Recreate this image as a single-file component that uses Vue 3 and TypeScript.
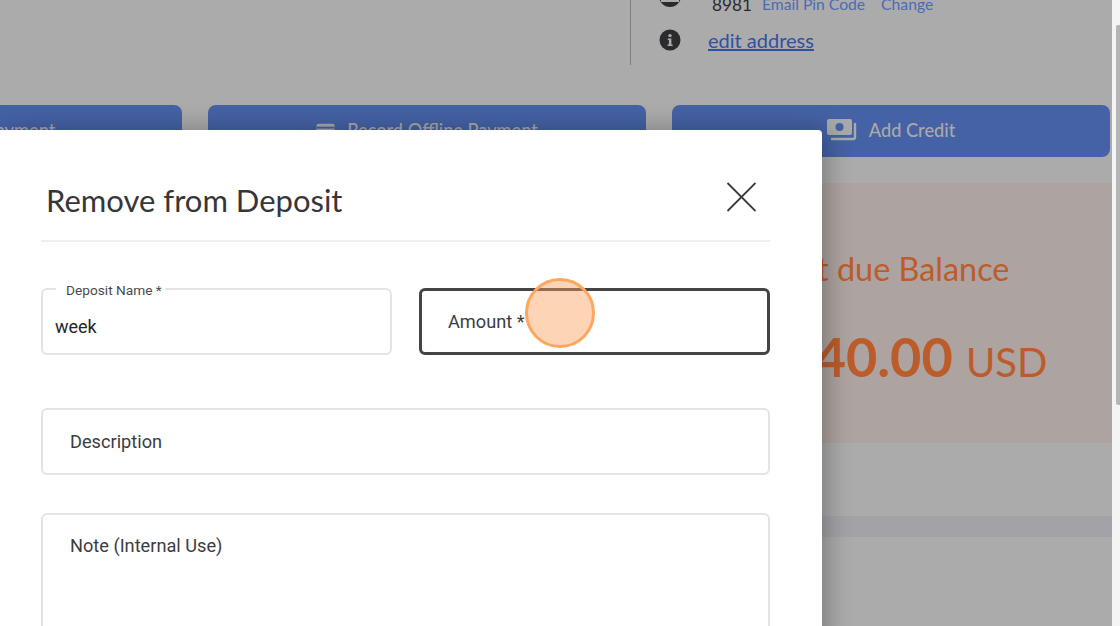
<template>
  <div class="page">
    <div class="content">
      <div class="top">
        <div class="info">
          <div class="infoRow cutRow">
            <span class="dot minus"><i></i></span>
            <span class="pin">8981</span>
            <a class="small">Email Pin Code</a>
            <a class="small">Change</a>
          </div>
          <div class="infoRow">
            <span class="dot">
              <svg width="22" height="22" viewBox="0 0 22 22">
                <circle cx="11" cy="11" r="10.5" fill="#2a2b2d" />
                <circle cx="11" cy="6.6" r="1.7" fill="#ababab" />
                <path d="M8.8 9.4h3.6v6h1.2v1.6H8.6v-1.6h1.3v-4.4H8.8z" fill="#ababab" />
              </svg>
            </span>
            <a class="edit">edit address</a>
          </div>
        </div>
      </div>

      <div class="actions">
        <div class="action">
          <svg width="19" height="14" viewBox="0 0 20 14">
            <rect x="0.5" y="0.5" width="19" height="13" rx="2" fill="#a9a9a9" />
            <rect x="0.5" y="3.5" width="19" height="2" fill="#4462a5" />
          </svg>
          <span>Take Card Payment</span>
        </div>
        <div class="action">
          <svg width="19" height="14" viewBox="0 0 20 14">
            <rect x="0.5" y="0.5" width="19" height="13" rx="2" fill="#a9a9a9" />
            <rect x="0.5" y="3.5" width="19" height="2" fill="#4462a5" />
          </svg>
          <span>Record Offline Payment</span>
        </div>
        <div class="action">
          <svg width="30" height="22" viewBox="0 0 30 22">
            <rect x="0" y="0" width="25" height="16" rx="2" fill="#a9a9a9" />
            <circle cx="12.5" cy="8" r="4" fill="#4462a5" />
            <path d="M28 4v14.5a1.5 1.5 0 0 1-1.5 1.5H4" fill="none" stroke="#a9a9a9" stroke-width="2.4" />
          </svg>
          <span>Add Credit</span>
        </div>
      </div>

      <div class="balance">
        <div class="balanceInner">
          <div class="balanceLabel">Past due Balance</div>
          <div class="balanceAmount">$240.00 <small>USD</small></div>
        </div>
      </div>
      <div class="stripe"></div>
    </div>

    <div class="scrollbar"><div class="thumb"></div></div>

    <div class="modal">
      <div class="head">
        <h2>Remove from Deposit</h2>
        <svg class="close" width="30" height="30" viewBox="0 0 30 30">
          <path d="M1.5 1l28 28M29.5 1L1.5 29" stroke="#3a3a3d" stroke-width="1.8" fill="none" />
        </svg>
      </div>
      <div class="form">
        <div class="pair">
          <div class="field filled">
            <label>Deposit Name *</label>
            <span class="value">week</span>
          </div>
          <div class="field focused">
            <span class="placeholder">Amount *</span>
          </div>
        </div>
        <div class="field">
          <span class="placeholder">Description</span>
        </div>
        <div class="field note">
          <span class="placeholder">Note (Internal Use)</span>
        </div>
      </div>
    </div>

    <div class="clickMark"></div>
  </div>
</template>

<script setup lang="ts">
</script>

<style>
html,
body {
  margin: 0;
  overflow: hidden;
}
</style>

<style scoped>
.page {
  position: relative;
  width: 1120px;
  height: 626px;
  overflow: hidden;
  display: flex;
  background: #ababab;
  font-family: Lato, "Liberation Sans", sans-serif;
}
.content {
  width: 1112px;
  flex-shrink: 0;
}
.top {
  height: 65px;
  margin-bottom: 40px;
  display: flex;
}
.info {
  margin-left: 630px;
  padding-left: 28px;
  border-left: 1px solid #7f7f7f;
  height: 65px;
  box-sizing: border-box;
  flex: 1;
}
.infoRow {
  display: flex;
  align-items: center;
  height: 40px;
}
.cutRow {
  height: 24px;
  margin-top: -8px;
  margin-bottom: 4px;
}
.dot {
  width: 22px;
  height: 22px;
  flex-shrink: 0;
  margin-right: 27px;
  display: block;
}
.minus {
  background: #2a2b2d;
  border-radius: 50%;
  position: relative;
  margin-top: -16px;
  margin-right: 28px;
}
.minus i {
  position: absolute;
  left: 2px;
  right: 2px;
  top: 12px;
  height: 5px;
  background: #ababab;
}
.pin {
  font-size: 17.2px;
  color: #2a2a2a;
  margin-left: 3px;
  margin-right: 10px;
}
.small {
  font-size: 15.7px;
  color: #4a6cb5;
  margin-right: 16px;
}
.edit {
  font-size: 20px;
  color: #2f50a5;
  text-decoration: underline;
}
.actions {
  display: flex;
  gap: 26px;
  margin-left: -256px;
  width: 1366px;
}
.action {
  flex: 1;
  height: 52px;
  background: #4462a5;
  border-radius: 8px;
  display: flex;
  align-items: center;
  justify-content: center;
  gap: 12px;
  color: #a9a9a9;
  font-size: 18.2px;
  font-weight: 500;
  padding-bottom: 2px;
  box-sizing: border-box;
}
.balance {
  height: 260px;
  margin-top: 26px;
  background: #ada3a0;
  overflow: hidden;
}
.balanceInner {
  margin-left: 768px;
  padding-top: 66px;
  color: #bd5c2b;
}
.balanceLabel {
  font-size: 32.4px;
  line-height: 40px;
  white-space: nowrap;
}
.balanceAmount {
  margin-top: 38px;
  margin-left: -16px;
  font-size: 54px;
  line-height: 60px;
  font-weight: 700;
  white-space: nowrap;
}
.balanceAmount small {
  font-size: 40px;
  font-weight: 400;
}
.stripe {
  height: 21px;
  margin-top: 73px;
  background: #a2a3a7;
}
.scrollbar {
  flex: 1;
  background: #f4f4f4;
  padding-top: 25px;
  display: flex;
  justify-content: flex-end;
}
.thumb {
  width: 4px;
  height: 380px;
  background: #b5b5b5;
  border-radius: 2px 0 0 2px;
}
.modal {
  position: absolute;
  left: 0;
  top: 130px;
  width: 822px;
  height: 520px;
  box-sizing: border-box;
  padding: 0 52px 0 41px;
  background: #fff;
  border-top-right-radius: 4px;
  box-shadow: 4px 0 26px rgba(0, 0, 0, 0.3);
}
.head {
  height: 112px;
  border-bottom: 2px solid #eeeeee;
  box-sizing: border-box;
  display: flex;
  justify-content: space-between;
  padding: 52px 14px 0 5px;
}
.head h2 {
  margin: 0;
  font-size: 31px;
  line-height: 36px;
  font-weight: 400;
  color: #36363a;
}
.form {
  display: flex;
  flex-direction: column;
  padding-top: 46px;
  gap: 38px;
  font-family: Roboto, "Liberation Sans", sans-serif;
}
.pair {
  display: grid;
  grid-template-columns: 1fr 1fr;
  gap: 27px;
  margin-bottom: 15px;
}
.field {
  position: relative;
  height: 67px;
  box-sizing: border-box;
  border: 2px solid #e4e4e4;
  border-radius: 6px;
  display: flex;
  align-items: center;
  padding-left: 27px;
}
.note {
  height: 160px;
  align-items: flex-start;
  padding-top: 20px;
}
.filled {
  padding-left: 12px;
}
.filled label {
  position: absolute;
  left: 13px;
  top: -9px;
  padding: 0 3px 0 10px;
  background: #fff;
  font-size: 13.7px;
  line-height: 18px;
  color: #4a4a4e;
}
.value {
  font-size: 18px;
  color: #262626;
  margin-top: 9px;
}
.focused {
  border: 3px solid #444446;
  padding-left: 26px;
}
.placeholder {
  font-size: 18.2px;
  color: #3c3c40;
}
.clickMark {
  position: absolute;
  left: 525px;
  top: 278px;
  width: 70px;
  height: 70px;
  box-sizing: border-box;
  border-radius: 50%;
  border: 3px solid #fba75e;
  background: rgba(253, 160, 95, 0.45);
}
</style>
